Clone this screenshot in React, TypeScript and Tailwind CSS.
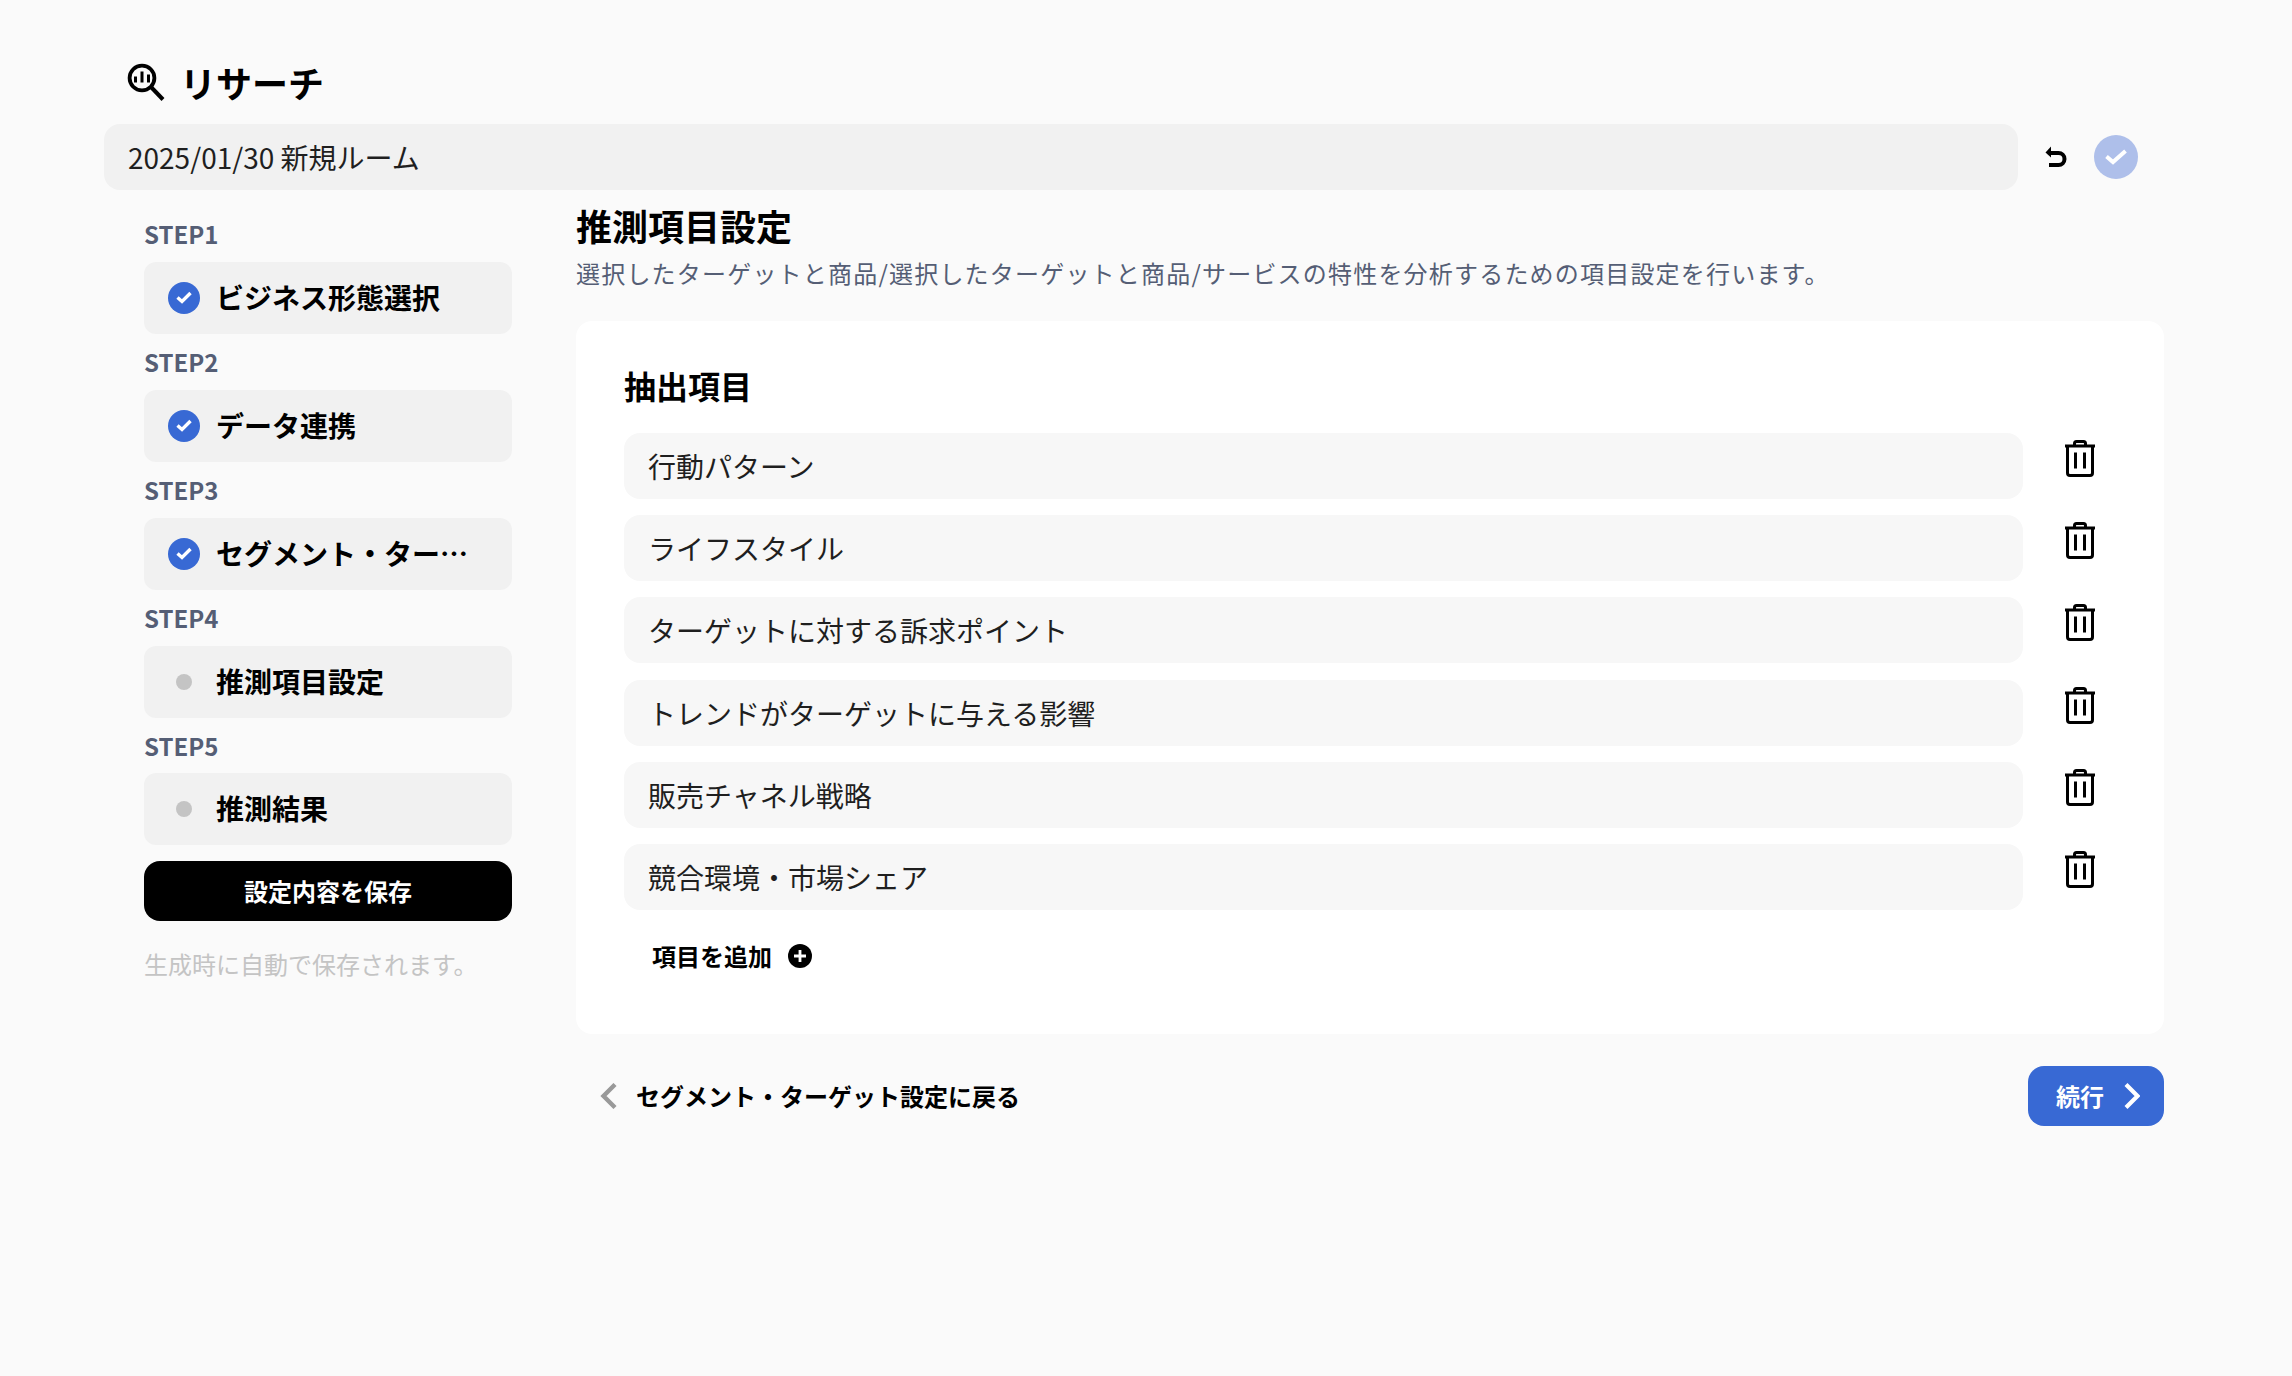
import React from 'react';

const STEPS = [
  { label: 'STEP1', title: 'ビジネス形態選択', done: true },
  { label: 'STEP2', title: 'データ連携', done: true },
  { label: 'STEP3', title: 'セグメント・ターゲット設定', done: true },
  { label: 'STEP4', title: '推測項目設定', done: false },
  { label: 'STEP5', title: '推測結果', done: false },
];

const ITEMS = [
  '行動パターン',
  'ライフスタイル',
  'ターゲットに対する訴求ポイント',
  'トレンドがターゲットに与える影響',
  '販売チャネル戦略',
  '競合環境・市場シェア',
];

const ResearchIcon = () => (
  <svg width="38" height="38" viewBox="0 0 38 38" fill="none" stroke="#000" strokeWidth="3.8" className="shrink-0">
    <circle cx="15" cy="15" r="12.4" />
    <path d="M24 24 36 36.5" strokeWidth="4" />
    <path d="M8.5 13.5v6M15 8.5v11M21.5 11.5v8" strokeWidth="3" />
  </svg>
);

const UndoIcon = () => (
  <svg width="22" height="22" viewBox="0 0 22 22" fill="none" className="shrink-0">
    <path d="M5 7h8.5a6 6 0 0 1 0 12H4" stroke="#000" strokeWidth="4" />
    <path d="M6 .5.5 6.5l5.5 5z" fill="#000" />
  </svg>
);

const TrashIcon = () => (
  <svg width="30" height="37" viewBox="0 0 30 37" fill="none" stroke="#000" strokeWidth="3" className="mt-[7px] ml-[42px] mr-[21px] shrink-0 self-start">
    <path d="M0 6h30" />
    <path d="M2.5 6v27a2.5 2.5 0 0 0 2.5 2.5h20a2.5 2.5 0 0 0 2.5-2.5V6" />
    <path d="M9.5 5.5V3.5a2 2 0 0 1 2-2h7a2 2 0 0 1 2 2v2" />
    <path d="M10.5 12.5v16M19.5 12.5v16" />
  </svg>
);

const CheckBadge = () => (
  <span className="w-[32px] h-[32px] rounded-full bg-[#3869d4] flex items-center justify-center shrink-0">
    <svg width="16" height="13" viewBox="0 0 16 13" fill="none" stroke="#fff" strokeWidth="3.4">
      <path d="M1.5 6.5 6 10.5 14.5 2" />
    </svg>
  </span>
);

export default function App() {
  return (
    <div className="min-h-screen bg-[#fafafa] font-['Noto_Sans_CJK_JP',sans-serif] text-black pb-[240px]">
      <header className="h-[124px] pt-[40px] pl-[127px] flex items-center gap-[15px]">
        <ResearchIcon />
        <h1 className="text-[36px] leading-[48px] font-bold">リサーチ</h1>
      </header>

      <div className="flex items-center pl-[104px]">
        <div className="w-[1914px] h-[66px] rounded-[16px] bg-[#f1f1f1] pl-[24px] pb-[1px] flex items-center text-[28px] text-[#1f1f1f]">
          2025/01/30 新規ルーム
        </div>
        <div className="ml-[27px]"><UndoIcon /></div>
        <span className="ml-[27px] w-[44px] h-[44px] rounded-full bg-[#aebfea] flex items-center justify-center">
          <svg width="22" height="16" viewBox="0 0 22 16" fill="none" stroke="#fff" strokeWidth="4">
            <path d="M1.5 7.5 8 13 20.5 2" />
          </svg>
        </span>
      </div>

      <div className="flex pl-[144px] gap-[64px]">
        <aside className="w-[368px] pt-[16px] shrink-0">
          {STEPS.map((step) => (
            <div key={step.label}>
              <div className="h-[55.9px] flex items-center text-[24px] font-bold text-[#555e75]">{step.label}</div>
              <div className="h-[72px] rounded-[12px] bg-[#f1f1f1] pl-[24px] pr-[40px] pb-[2px] flex items-center gap-[16px]">
                {step.done ? (
                  <span className="mt-[2px]"><CheckBadge /></span>
                ) : (
                  <span className="mt-[2px] w-[32px] flex justify-center shrink-0">
                    <span className="w-[16px] h-[16px] rounded-full bg-[#c4c4c4]" />
                  </span>
                )}
                <span className="text-[28px] font-bold truncate">{step.title}</span>
              </div>
            </div>
          ))}
          <button className="mt-[16px] w-full h-[60px] rounded-[16px] bg-black text-white text-[24px] font-bold flex items-center justify-center">
            設定内容を保存
          </button>
          <p className="mt-[25px] text-[24px] leading-[36px] text-[#c4c4c4]">生成時に自動で保存されます。</p>
        </aside>

        <main className="w-[1588px] pt-[9px]">
          <h2 className="text-[36px] leading-[52px] font-bold">推測項目設定</h2>
          <p className="mt-[4px] text-[24px] leading-[36px] tracking-[1.2px] text-[#555e75]">
            選択したターゲットと商品/選択したターゲットと商品/サービスの特性を分析するための項目設定を行います。
          </p>

          <section className="mt-[30px] rounded-[16px] bg-white px-[48px] pt-[40px] pb-[54px]">
            <h3 className="text-[32px] leading-[48px] font-bold">抽出項目</h3>
            <div className="mt-[24px] flex flex-col gap-[16.2px]">
              {ITEMS.map((item) => (
                <div key={item} className="flex">
                  <div className="flex-1 h-[66px] rounded-[16px] bg-[#f7f7f7] pl-[24px] flex items-center text-[28px] text-[#1f1f1f]">
                    {item}
                  </div>
                  <TrashIcon />
                </div>
              ))}
            </div>
            <button className="mt-[22px] ml-[28px] h-[48px] flex items-center gap-[16px] text-[24px] font-bold">
              項目を追加
              <span className="w-[24px] h-[24px] rounded-full bg-black flex items-center justify-center">
                <svg width="12" height="12" viewBox="0 0 12 12" stroke="#fff" strokeWidth="2.8">
                  <path d="M6 0v12M0 6h12" />
                </svg>
              </span>
            </button>
          </section>

          <div className="mt-[32px] flex items-center justify-between">
            <button className="ml-[24px] flex items-center gap-[19px] text-[24px] font-bold">
              <svg width="17" height="26" viewBox="0 0 17 26" fill="none" stroke="#999" strokeWidth="4.4">
                <path d="M15 1.5 3.5 13l11.5 11.5" />
              </svg>
              セグメント・ターゲット設定に戻る
            </button>
            <button className="w-[136px] h-[60px] rounded-[16px] bg-[#3869d4] text-white text-[24px] font-bold pl-[28px] flex items-center gap-[20px]">
              続行
              <svg width="16" height="26" viewBox="0 0 16 26" fill="none" stroke="#fff" strokeWidth="4.2">
                <path d="M2 1.5 13.5 13 2 24.5" />
              </svg>
            </button>
          </div>
        </main>
      </div>
    </div>
  );
}
